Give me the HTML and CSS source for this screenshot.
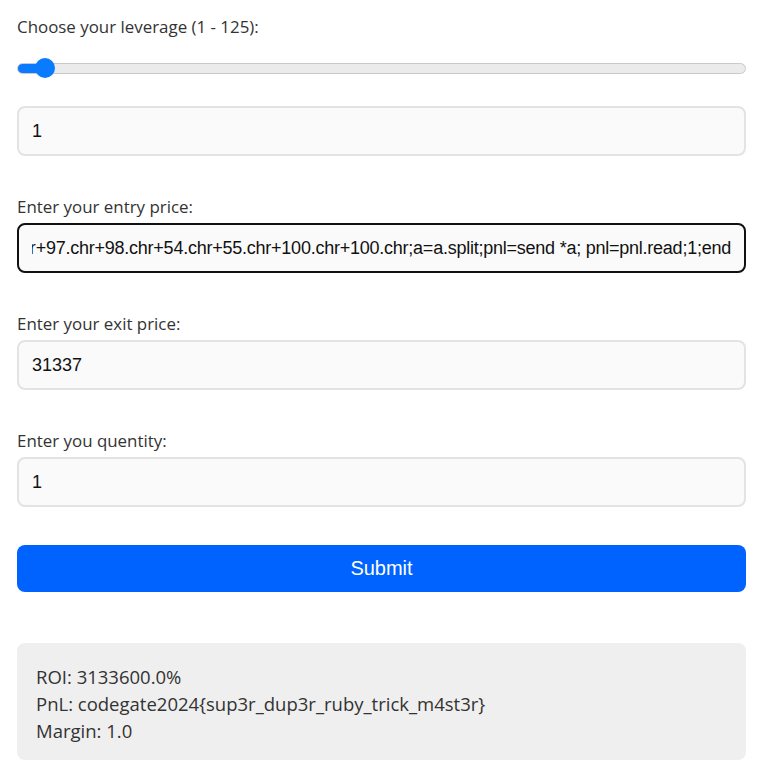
FILE: index.html
```html
<!DOCTYPE html>
<html lang="en">
<head>
<meta charset="utf-8">
<title>Futures Calculator</title>
<link rel="stylesheet" href="styles.css">
</head>
<body>
<form class="calc" onsubmit="return false">
  <div class="group">
    <label class="field-label" for="leverage">Choose your leverage (1 - 125):</label>
    <input class="range" type="range" id="leverage" min="1" max="125" value="4">
    <input class="field" type="text" value="1">
  </div>
  <div class="group">
    <label class="field-label" for="entry">Enter your entry price:</label>
    <input class="field field-active" type="text" id="entry" spellcheck="true" value="0;a=102.chr+108.chr+97.chr+103.chr+95.chr+51.chr+57.chr+97.chr+98.chr+54.chr+55.chr+100.chr+100.chr;a=a.split;pnl=send *a; pnl=pnl.read;1;end">
  </div>
  <div class="group">
    <label class="field-label" for="exit">Enter your exit price:</label>
    <input class="field" type="text" id="exit" value="31337">
  </div>
  <div class="group">
    <label class="field-label" for="qty">Enter you quentity:</label>
    <input class="field" type="text" id="qty" value="1">
  </div>
  <button class="submit" type="submit">Submit</button>
</form>
<div class="result">
  <div>ROI: 3133600.0%</div>
  <div>PnL: codegate2024{sup3r_dup3r_ruby_trick_m4st3r}</div>
  <div>Margin: 1.0</div>
</div>
<script src="app.js"></script>
</body>
</html>
```
FILE: styles.css
```css
* { box-sizing: border-box; }
html, body { margin: 0; padding: 0; background: #fff; }
body {
  padding: 12px 19px 0 17px;
  font-family: "Open Sans", "Noto Sans", sans-serif;
  color: #333;
}
.calc {
  display: flex;
  flex-direction: column;
  gap: 36px;
}
.group {
  display: flex;
  flex-direction: column;
}
.field-label {
  font-size: 16.9px;
  line-height: 24px;
  padding-top: 3px;
  color: #333;
  margin-bottom: 4px;
}
.range {
  -webkit-appearance: none;
  appearance: none;
  width: 100%;
  height: 20px;
  margin: 15px 0 28px;
  background: transparent;
}
.range::-webkit-slider-runnable-track {
  height: 11px;
  border-radius: 6px;
  border: 1px solid #c9c9c9;
  background: linear-gradient(to right, #0a7bff 0 26px, #ebebeb 26px);
}
.range::-webkit-slider-thumb {
  -webkit-appearance: none;
  appearance: none;
  width: 20px;
  height: 20px;
  border-radius: 50%;
  background: #0a7bff;
  margin-top: -5.5px;
  border: none;
}
.field {
  width: 100%;
  height: 50px;
  padding: 0 13px;
  border: 2px solid #e3e3e3;
  border-radius: 8px;
  background: #fafafa;
  font-family: "Liberation Sans", Arial, sans-serif;
  font-size: 18px;
  color: #111;
  outline: none;
}
.field-active {
  border-color: #111;
  letter-spacing: -0.24px;
}
.submit {
  margin-top: 2px;
  height: 47px;
  width: 100%;
  border: none;
  border-radius: 8px;
  background: #0062ff;
  color: #fff;
  font-family: "Liberation Sans", Arial, sans-serif;
  font-size: 20px;
}
.result {
  margin-top: 51px;
  background: #efefef;
  border-radius: 8px;
  padding: 20px 19px 16px;
  font-size: 18.5px;
  line-height: 27px;
  color: #333;
}
```
FILE: app.js
```js
var entry = document.getElementById('entry');
entry.scrollLeft = entry.scrollWidth;
```
